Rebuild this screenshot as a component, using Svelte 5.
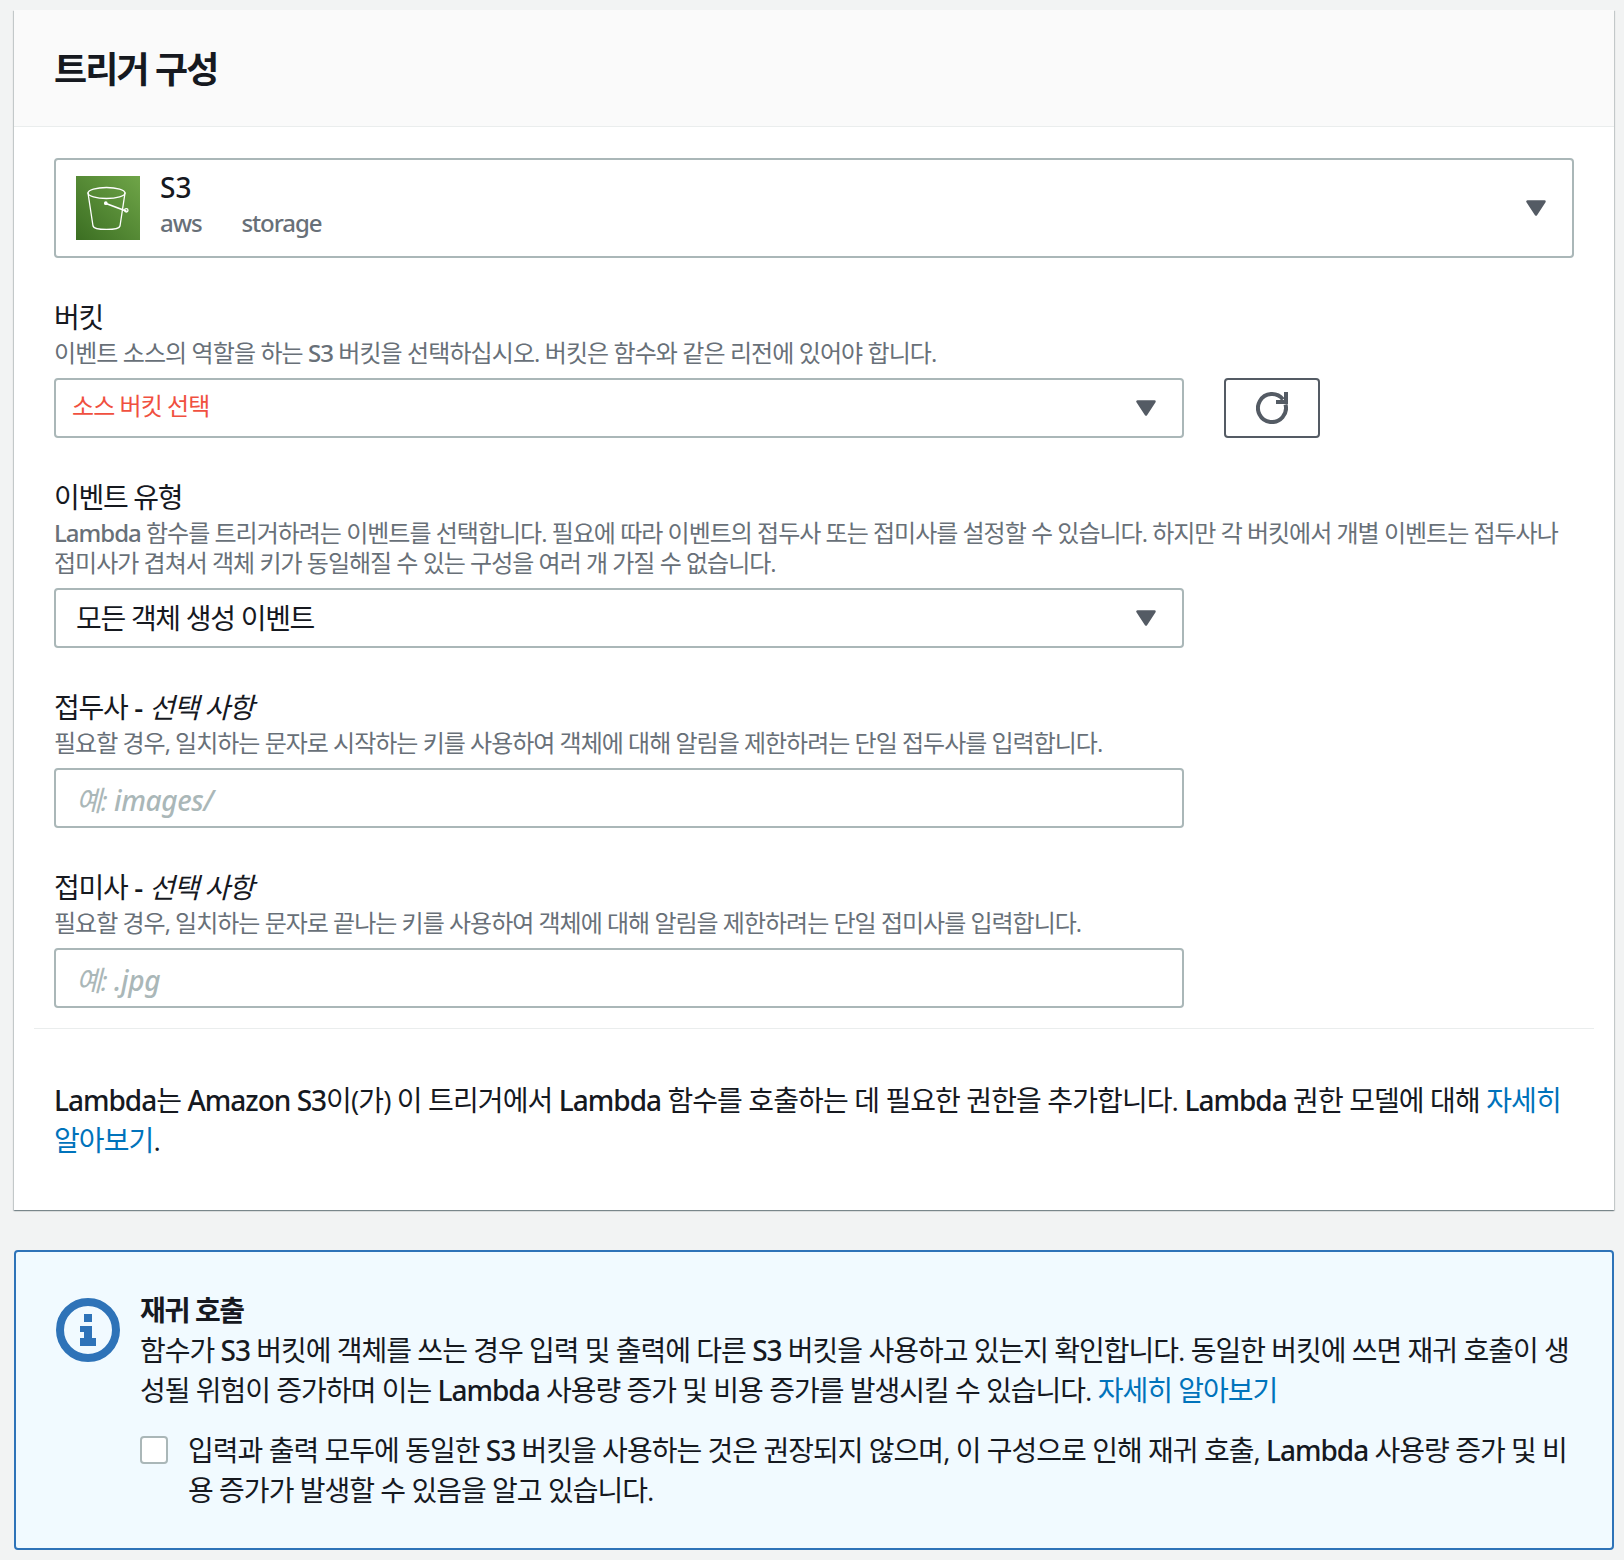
<script>
  const caret = "M1.5 1.500 H18.500 L10 14.500 Z";
</script>

{#snippet arrow()}
  <svg class="caret" viewBox="0 0 20 16" width="20" height="16">
    <path d={caret} fill="#545b64" stroke="#545b64" stroke-width="2.500" stroke-linejoin="round" />
  </svg>
{/snippet}

<div class="page">
  <section class="panel">
    <header class="panel-head"><h2>트리거 구성</h2></header>
    <div class="panel-body">
      <div class="select big">
        <div class="s3-icon">
          <svg viewBox="0 0 64 64" width="64" height="64">
            <defs>
              <linearGradient id="g" x1="0" y1="1" x2="1" y2="0">
                <stop offset="0" stop-color="#3b6e22" />
                <stop offset="1" stop-color="#6fa548" />
              </linearGradient>
            </defs>
            <rect width="64" height="64" fill="url(#g)" />
            <g fill="none" stroke="#fff" stroke-width="1.300" stroke-linecap="round" stroke-linejoin="round">
              <ellipse cx="30.500" cy="17" rx="18.500" ry="5.500" />
              <path d="M12 17 L17 50 C18 54.500 43 54.500 44 50 L49 17" />
              <path d="M30 27.500 L50 35" stroke-width="1.800" />
              <circle cx="29.800" cy="27.200" r="1.200" fill="#fff" />
              <circle cx="50.300" cy="34.300" r="1.700" />
            </g>
          </svg>
        </div>
        <div class="s3-text">
          <div class="s3-name en-font">S3</div>
          <div class="s3-tags en-font"><span>aws</span><span>storage</span></div>
        </div>
        {@render arrow()}
      </div>

      <div class="field bucket">
        <div class="label">버킷</div>
        <div class="desc">이벤트 소스의 역할을 하는 <span class="en">S3</span> 버킷을 선택하십시오. 버킷은 함수와 같은 리전에 있어야 합니다.</div>
        <div class="row">
          <div class="select normal error-text">소스 버킷 선택{@render arrow()}</div>
          <button class="refresh" aria-label="새로 고침">
            <svg viewBox="0 0 32 32" width="32" height="32">
              <path d="M29.500 12.400 A14 14 0 1 1 27 7.400" fill="none" stroke="#545b64" stroke-width="4" />
              <path d="M20 8 H28 V0 H32 V12 H20 Z" fill="#545b64" />
            </svg>
          </button>
        </div>
      </div>

      <div class="field event">
        <div class="label">이벤트 유형</div>
        <div class="desc"><span class="en">Lambda</span> 함수를 트리거하려는 이벤트를 선택합니다. 필요에 따라 이벤트의 접두사 또는 접미사를 설정할 수 있습니다. 하지만 각 버킷에서 개별 이벤트는 접두사나 접미사가 겹쳐서 객체 키가 동일해질 수 있는 구성을 여러 개 가질 수 없습니다.</div>
        <div class="select normal value">모든 객체 생성 이벤트{@render arrow()}</div>
      </div>

      <div class="field prefix">
        <div class="label">접두사 <span class="en dash">-</span> <i>선택 사항</i></div>
        <div class="desc">필요할 경우, 일치하는 문자로 시작하는 키를 사용하여 객체에 대해 알림을 제한하려는 단일 접두사를 입력합니다.</div>
        <div class="input">예: <span class="en">images/</span></div>
      </div>

      <div class="field suffix">
        <div class="label">접미사 <span class="en dash">-</span> <i>선택 사항</i></div>
        <div class="desc">필요할 경우, 일치하는 문자로 끝나는 키를 사용하여 객체에 대해 알림을 제한하려는 단일 접미사를 입력합니다.</div>
        <div class="input">예: <span class="en">.jpg</span></div>
      </div>
    </div>
    <div class="divider"></div>
    <p class="perm"><span class="en">Lambda</span>는 <span class="en">Amazon S3</span>이(가) 이 트리거에서 <span class="en">Lambda</span> 함수를 호출하는 데 필요한 권한을 추가합니다. <span class="en">Lambda</span> 권한 모델에 대해 <a href="#a">자세히 알아보기</a>.</p>
  </section>

  <section class="alert">
    <svg class="info" viewBox="0 0 64 64" width="64" height="64">
      <circle cx="32" cy="32" r="28" fill="none" stroke="#2e73b8" stroke-width="8" />
      <path d="M28 16 H36 V24 H28 Z M24 28 H36 V40 H40 V48 H24 V40 H28 V34 H24 Z" fill="#2e73b8" />
    </svg>
    <div class="alert-main">
      <div class="alert-title">재귀 호출</div>
      <p class="alert-text">함수가 <span class="en">S3</span> 버킷에 객체를 쓰는 경우 입력 및 출력에 다른 <span class="en">S3</span> 버킷을 사용하고 있는지 확인합니다. 동일한 버킷에 쓰면 재귀 호출이 생성될 위험이 증가하며 이는 <span class="en">Lambda</span> 사용량 증가 및 비용 증가를 발생시킬 수 있습니다. <a href="#b">자세히 알아보기</a></p>
      <div class="check">
        <span class="box"></span>
        <span class="check-text">입력과 출력 모두에 동일한 <span class="en">S3</span> 버킷을 사용하는 것은 권장되지 않으며, 이 구성으로 인해 재귀 호출, <span class="en">Lambda</span> 사용량 증가 및 비용 증가가 발생할 수 있음을 알고 있습니다.</span>
      </div>
    </div>
  </section>
</div>

<style>
  :global(body) { margin: 0; background: #f2f3f3; }
  .page {
    font-family: "Open Sans", "Noto Sans CJK KR", sans-serif;
    color: #16191f;
    font-size: 28px;
    line-height: 40px;
    letter-spacing: -0.9px;
    padding: 10px 10px 10px 14px;
  }
  .en, .en-font { font-family: "Noto Sans", "Open Sans", sans-serif; font-weight: 500; letter-spacing: -1px; }
  .panel {
    background: #fff;
    box-shadow: 0 1px 1px 0 rgba(0,28,36,.3), 1px 1px 1px 0 rgba(0,28,36,.15), -1px 1px 1px 0 rgba(0,28,36,.15);
    height: 1200px;
  }
  .panel-head {
    background: #fafafa;
    border-bottom: 1px solid #eaeded;
    padding: 4px 40px 0;
    height: 112px;
    display: flex;
    align-items: center;
  }
  h2 { margin: 0; font-size: 36px; font-weight: 700; line-height: 44px; letter-spacing: -1.9px; }
  .panel-body { padding: 31px 40px 0; }
  .select, .input {
    box-sizing: border-box;
    border: 2px solid #aab7b8;
    border-radius: 4px;
    background: #fff;
    position: relative;
  }
  .select.big { height: 100px; display: flex; align-items: center; padding: 0 20px; }
  .s3-icon { width: 64px; height: 64px; margin-right: 20px; }
  .s3-icon svg { display: block; }
  .s3-text { margin-top: -6px; }
  .s3-name { font-size: 28px; line-height: 36px; letter-spacing: 0; }
  .s3-tags { color: #687078; font-size: 24px; line-height: 36px; display: flex; gap: 40px; letter-spacing: -1.1px; }
  .caret {
    position: absolute;
    right: 26px;
    top: 50%;
    margin-top: -8px;
  }
  .bucket { margin-top: 39px; }
  .event { margin-top: 39px; }
  .prefix { margin-top: 39px; }
  .suffix { margin-top: 39px; }
  .label { font-size: 28px; line-height: 40px; letter-spacing: -1.3px; }
  .label i { font-style: italic; }
  .dash { margin: 0 1px; }
  .desc { font-size: 24px; line-height: 30px; color: #687078; margin: 1px 0 10px; letter-spacing: -1px; }
  .bucket .desc { letter-spacing: -0.92px; }
  .row { display: flex; gap: 40px; }
  .normal { height: 60px; width: 1130px; display: flex; align-items: center; }
  .error-text { color: #f0503f; font-size: 24px; padding-left: 16px; padding-bottom: 4px; letter-spacing: -0.95px; }
  .value { font-size: 28px; padding-left: 20px; letter-spacing: -1.3px; }
  .refresh {
    width: 96px; height: 60px;
    background: #fff;
    border: 2px solid #545b64;
    border-radius: 4px;
    padding: 0;
    display: flex; align-items: center; justify-content: center;
  }
  .input {
    width: 1130px; height: 60px;
    display: flex; align-items: center;
    padding-left: 20px;
    padding-top: 3px;
    color: #aab7b8;
    font-style: italic;
    font-size: 28px;
    gap: 7px;
  }
  .input .en { letter-spacing: -0.4px; }
  .divider { height: 1px; background: #eaeded; margin: 20px 20px 0; }
  .perm { margin: 51px 40px 0; font-size: 28px; line-height: 40px; letter-spacing: -0.9px; }
  a { color: #0073bb; text-decoration: none; }
  .alert {
    box-sizing: border-box;
    margin-top: 40px;
    height: 300px;
    border: 2px solid #2e73b8;
    border-radius: 4px;
    background: #f1faff;
    display: flex;
    padding: 38px 30px 0 40px;
  }
  .info { flex: none; margin: 8px 20px 0 0; }
  .alert-main { flex: 1; }
  .alert-title { font-weight: 700; font-size: 28px; line-height: 40px; letter-spacing: -1.3px; }
  .alert-text { margin: 0; line-height: 40px; letter-spacing: -1px; }
  .check { display: flex; margin-top: 20px; letter-spacing: -0.98px; }
  .box {
    flex: none;
    box-sizing: border-box;
    width: 28px; height: 28px;
    margin: 6px 20px 0 0;
    border: 2px solid #aab7b8;
    border-radius: 4px;
    background: #fff;
  }
</style>
